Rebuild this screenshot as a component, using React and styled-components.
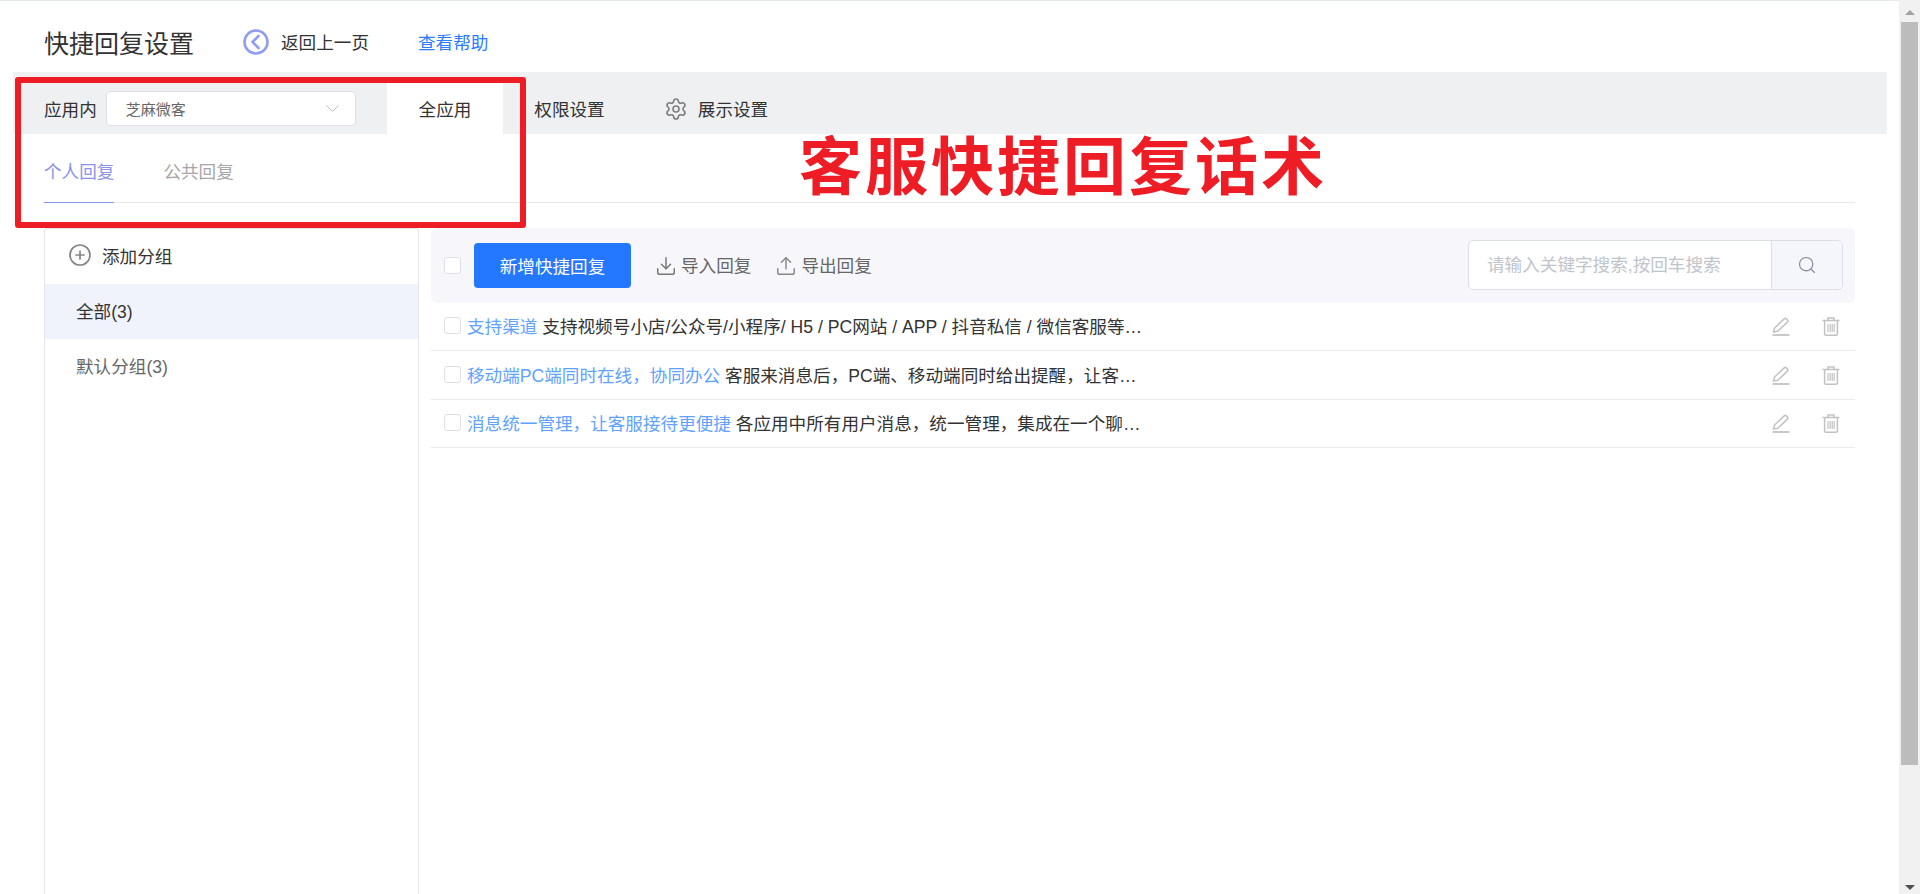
import React from 'react'
import styled, { createGlobalStyle } from 'styled-components'
import { ChevronDown, CirclePlus, Download, Search, Settings, Upload } from 'lucide-react'

const GlobalStyle = createGlobalStyle`
  html, body {
    margin: 0;
    height: 100%;
    overflow: hidden;
    background: #fff;
  }
  * { box-sizing: border-box; }
  body {
    font-family: "Liberation Sans", "Noto Sans CJK SC", sans-serif;
    font-size: 17.6px;
    color: #333;
  }
`

const replies = [
  { id: 1, title: '支持渠道', text: '支持视频号小店/公众号/小程序/ H5 / PC网站 / APP / 抖音私信 / 微信客服等多个渠道接入，统一回复' },
  { id: 2, title: '移动端PC端同时在线，协同办公', text: '客服来消息后，PC端、移动端同时给出提醒，让客服不错过任何消息' },
  { id: 3, title: '消息统一管理，让客服接待更便捷', text: '各应用中所有用户消息，统一管理，集成在一个聊天窗口中处理' },
]

function BackIcon() {
  return (
    <svg width="26" height="26" viewBox="0 0 26 26" fill="none" stroke="#8f9df0" strokeWidth="2.6">
      <circle cx="13" cy="13" r="11.5" />
      <path d="M15.5 7 9.5 13l6 6" strokeLinecap="round" strokeLinejoin="round" />
    </svg>
  )
}

function PencilIcon() {
  return (
    <svg width="18" height="19" viewBox="0 0 18 19" fill="none" stroke="#c2c2c2" strokeWidth="1.5">
      <path d="M1.5 15 2.6 11 12.4 1.6a1.2 1.2 0 0 1 1.7 0l1.6 1.6a1.2 1.2 0 0 1 0 1.7L5.8 14.2z" strokeLinejoin="round" />
      <path d="M0.5 18h17" strokeWidth="1.8" />
    </svg>
  )
}

function TrashIcon() {
  return (
    <svg width="18" height="19" viewBox="0 0 18 19" fill="none" stroke="#c2c2c2" strokeWidth="1.5">
      <path d="M0.5 3.5h17M6 3.2V1h6v2.2" />
      <path d="M2.6 3.5v13.2c0 1 .6 1.6 1.6 1.6h9.6c1 0 1.6-.6 1.6-1.6V3.5" />
      <path d="M6 7v8M8.2 7v8M10.2 7v8M12.2 7v8" strokeWidth="1.2" />
    </svg>
  )
}

function App() {
  return (
    <Page>
      <GlobalStyle />
      <Main>
        <Header>
          <PageTitle>快捷回复设置</PageTitle>
          <BackLink><BackIcon />返回上一页</BackLink>
          <HelpLink>查看帮助</HelpLink>
        </Header>

        <TopBand>
          <AppPicker>
            <span>应用内</span>
            <SelectBox>
              <span>芝麻微客</span>
              <ChevronDown size={23} strokeWidth={1} color="#b4b8c2" />
            </SelectBox>
          </AppPicker>
          <TopTab $active>全应用</TopTab>
          <TopTab>权限设置</TopTab>
          <TopTab $gear>
            <Settings size={24} strokeWidth={1.6} color="#7c7c7c" />
            展示设置
          </TopTab>
        </TopBand>

        <Content>
          <SubTabs>
            <SubTab $active>个人回复</SubTab>
            <SubTab>公共回复</SubTab>
          </SubTabs>

          <Columns>
            <GroupPanel>
              <AddGroup>
                <CirclePlus size={24} strokeWidth={1.7} color="#858585" />
                <span>添加分组</span>
              </AddGroup>
              <GroupItem $active>全部(3)</GroupItem>
              <GroupItem>默认分组(3)</GroupItem>
            </GroupPanel>

            <ReplyPanel>
              <Toolbar>
                <CheckBox />
                <PrimaryButton>新增快捷回复</PrimaryButton>
                <ToolAction>
                  <Download size={22} strokeWidth={1.6} color="#777" />
                  <span>导入回复</span>
                </ToolAction>
                <ToolAction>
                  <Upload size={22} strokeWidth={1.6} color="#888" />
                  <span>导出回复</span>
                </ToolAction>
                <SearchBox>
                  <SearchInput>请输入关键字搜索,按回车搜索</SearchInput>
                  <SearchButton>
                    <Search size={20} strokeWidth={1.4} color="#7d8799" />
                  </SearchButton>
                </SearchBox>
              </Toolbar>

              {replies.map((reply) => (
                <ReplyRow key={reply.id}>
                  <CheckBox />
                  <ReplyText>
                    <ReplyTitle>{reply.title}</ReplyTitle> {reply.text}
                  </ReplyText>
                  <RowActions>
                    <PencilIcon />
                    <TrashIcon />
                  </RowActions>
                </ReplyRow>
              ))}
            </ReplyPanel>
          </Columns>
        </Content>

        <RedFrame />
        <Headline>客服快捷回复话术</Headline>
      </Main>

      <ScrollTrack>
        <ScrollArrow $up />
        <ScrollThumb />
        <ScrollArrow />
      </ScrollTrack>
    </Page>
  )
}

const Page = styled.div`
  display: flex;
  height: 894px;
  overflow: hidden;
`

const Main = styled.div`
  position: relative;
  flex: 1;
  display: flex;
  flex-direction: column;
  min-width: 0;
  border-top: 1px solid #e5e8ed;
`

const Header = styled.div`
  display: flex;
  align-items: center;
  height: 71px;
  padding: 10px 0 0 44px;
`

const PageTitle = styled.h1`
  margin: 0 49px 0 0;
  font-size: 25px;
  font-weight: 400;
  color: #333;
`

const BackLink = styled.a`
  display: flex;
  align-items: center;
  gap: 12px;
  margin-right: 49px;
  color: #333;
`

const HelpLink = styled.a`
  color: #2b7cff;
`

const TopBand = styled.div`
  display: flex;
  align-items: flex-end;
  height: 62px;
  margin: 0 12px 0 13px;
  background: #eff0f2;
`

const AppPicker = styled.div`
  display: flex;
  align-items: center;
  gap: 9px;
  width: 374px;
  height: 51px;
  padding-left: 31px;
`

const SelectBox = styled.div`
  display: flex;
  align-items: center;
  justify-content: space-between;
  width: 250px;
  height: 35px;
  padding: 0 11px 0 19px;
  background: #fff;
  border: 1px solid #dcdfe6;
  border-radius: 4px;
  font-size: 15px;
  color: #666;
`

const TopTab = styled.div`
  display: flex;
  align-items: center;
  justify-content: center;
  gap: 10px;
  width: ${(p) => (p.$active ? '116px' : p.$gear ? '144px' : '133px')};
  margin-left: ${(p) => (p.$gear ? '8px' : '0')};
  height: 51px;
  color: #333;
  background: ${(p) => (p.$active ? '#fff' : 'transparent')};
`

const Content = styled.div`
  flex: 1;
  display: flex;
  flex-direction: column;
  min-height: 0;
  padding: 0 44px;
`

const SubTabs = styled.div`
  display: flex;
  gap: 49px;
  height: 69px;
  border-bottom: 1px solid #e8e9ed;
`

const SubTab = styled.div`
  height: 69px;
  padding-top: 26px;
  line-height: 24px;
  color: ${(p) => (p.$active ? '#8a93ea' : '#a6a6a6')};
  border-bottom: 1px solid ${(p) => (p.$active ? '#8a93ea' : 'transparent')};
`

const Columns = styled.div`
  flex: 1;
  display: flex;
  gap: 12px;
  min-height: 0;
  margin-top: 25px;
`

const GroupPanel = styled.div`
  flex: none;
  width: 375px;
  border: 1px solid #e3e5ea;
  border-bottom: 0;
  border-radius: 3px 3px 0 0;
`

const AddGroup = styled.div`
  display: flex;
  align-items: center;
  gap: 10px;
  height: 55px;
  padding: 0 0 3px 23px;
  color: #333;
`

const GroupItem = styled.div`
  display: flex;
  align-items: center;
  height: 55px;
  padding: 0 0 3px 31px;
  color: ${(p) => (p.$active ? '#333' : '#666')};
  background: ${(p) => (p.$active ? '#f0f3fb' : 'transparent')};
`

const ReplyPanel = styled.div`
  flex: 1;
  min-width: 0;
`

const Toolbar = styled.div`
  display: flex;
  align-items: center;
  height: 75px;
  padding: 0 12px 0 13px;
  background: #f7f6fa;
  border-radius: 6px;
`

const CheckBox = styled.span`
  flex: none;
  width: 17px;
  height: 17px;
  background: #fff;
  border: 1px solid #dcdfe6;
  border-radius: 3px;
`

const PrimaryButton = styled.button`
  width: 157px;
  height: 45px;
  margin: 0 24px 0 13px;
  padding: 0;
  border: 0;
  border-radius: 4px;
  background: #2378ff;
  color: #fff;
  font: inherit;
`

const ToolAction = styled.span`
  display: flex;
  align-items: center;
  gap: 4px;
  margin-right: 24px;
  color: #666;

  span {
    margin-top: -2px;
  }
`

const SearchBox = styled.div`
  display: flex;
  width: 375px;
  height: 50px;
  margin-left: auto;
  margin-top: -1px;
  background: #fff;
  border: 1px solid #dcdfe6;
  border-radius: 5px;
  overflow: hidden;
`

const SearchInput = styled.div`
  flex: 1;
  padding-left: 18px;
  line-height: 48px;
  color: #c0c4cc;
`

const SearchButton = styled.div`
  display: flex;
  align-items: center;
  justify-content: center;
  width: 71px;
  background: #f4f6fb;
  border-left: 1px solid #dcdfe6;
`

const ReplyRow = styled.div`
  display: flex;
  align-items: center;
  gap: 6px;
  height: 48.4px;
  padding: 0 15px 2px 13px;
  border-bottom: 1px solid #ebebef;
`

const ReplyText = styled.div`
  width: 680px;
  white-space: nowrap;
  overflow: hidden;
  text-overflow: ellipsis;
  color: #333;
`

const ReplyTitle = styled.span`
  color: #5fa2ff;
`

const RowActions = styled.div`
  display: flex;
  gap: 32px;
  margin: 2px 0 0 auto;
`

const RedFrame = styled.div`
  position: absolute;
  left: 15px;
  top: 76px;
  width: 511px;
  height: 151px;
  border: 6px solid #ee1c25;
  border-radius: 3px;
`

const Headline = styled.div`
  position: absolute;
  left: 799px;
  top: 135px;
  font-size: 63px;
  font-weight: 700;
  line-height: 63px;
  letter-spacing: 3px;
  white-space: nowrap;
  color: #ee1c25;
`

const ScrollTrack = styled.div`
  flex: none;
  display: flex;
  flex-direction: column;
  justify-content: space-between;
  width: 21px;
  background: #f1f1f1;
`

const ScrollThumb = styled.div`
  height: 743px;
  margin: 0 2px auto 2px;
  background: #bcbcbc;
`

const ScrollArrow = styled.div`
  display: flex;
  align-items: center;
  justify-content: center;
  height: ${(p) => (p.$up ? '22px' : '14px')};
  padding-top: ${(p) => (p.$up ? '3px' : '0')};

  &::before {
    content: '';
    border-left: 5px solid transparent;
    border-right: 5px solid transparent;
    border-bottom: ${(p) => (p.$up ? '5px solid #a3a3a3' : '0')};
    border-top: ${(p) => (p.$up ? '0' : '5px solid #505050')};
  }
`

export default App
